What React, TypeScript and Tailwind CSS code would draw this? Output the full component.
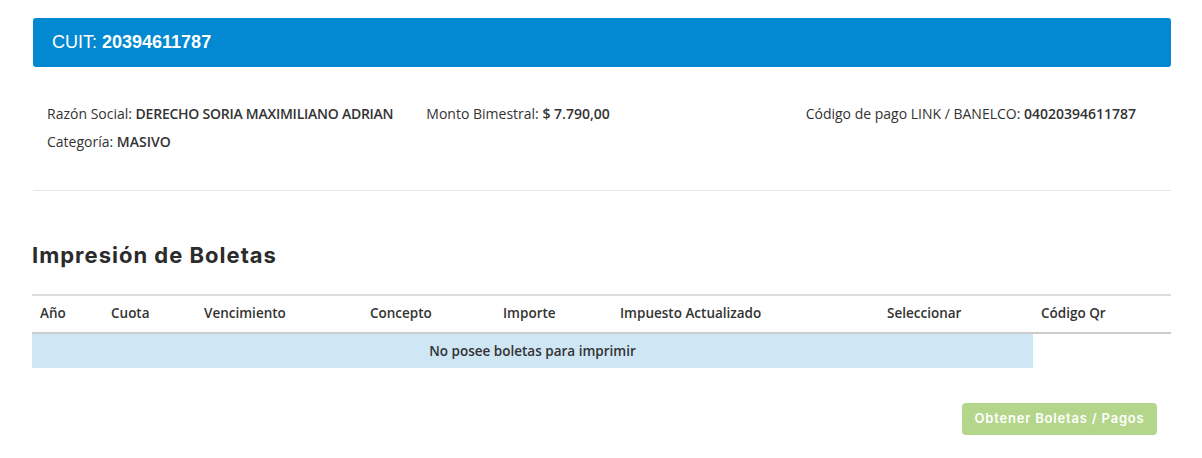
const cols = [
  { label: "Año", w: "w-[71px]" },
  { label: "Cuota", w: "w-[93px]" },
  { label: "Vencimiento", w: "w-[166px]" },
  { label: "Concepto", w: "w-[133px]" },
  { label: "Importe", w: "w-[117px]" },
  { label: "Impuesto Actualizado", w: "w-[267px]" },
  { label: "Seleccionar", w: "w-[154px]" },
  { label: "Código Qr", w: "" },
];

function Field({
  label,
  value,
  tight,
}: {
  label: string;
  value: string;
  tight?: boolean;
}) {
  return (
    <p className="whitespace-nowrap leading-[28px]">
      {label}:{" "}
      <b className={tight ? "font-semibold tracking-[-0.25px]" : "font-semibold"}>
        {value}
      </b>
    </p>
  );
}

export default function App() {
  return (
    <div className="min-h-[458px] bg-white pt-[18px] pl-[32px] pr-[31px] font-['Open_Sans',sans-serif] text-[#333]">
      <div className="ml-px flex h-[49px] items-center rounded-[3px] bg-[#0289d2] px-[19px] font-['Liberation_Sans',Arial,sans-serif] text-[18px] text-white">
        CUIT:&nbsp;<b>20394611787</b>
      </div>

      <div className="ml-px grid grid-cols-3 pt-[33px] pb-[34px] text-[14px]">
        <div className="px-[14px]">
          <Field label="Razón Social" value="DERECHO SORIA MAXIMILIANO ADRIAN" tight />
          <Field label="Categoría" value="MASIVO" />
        </div>
        <div className="px-[14px]">
          <Field label="Monto Bimestral" value="$ 7.790,00" />
        </div>
        <div className="px-[14px]">
          <Field label="Código de pago LINK / BANELCO" value="04020394611787" />
        </div>
      </div>

      <hr className="ml-px border-t border-[#e6e6e6]" />

      <h2 className="mt-[48px] font-['Inter',sans-serif] text-[22px] font-bold leading-[32px] tracking-[1px] text-[#2b2b2b]">
        Impresión de Boletas
      </h2>

      <table className="mt-[23px] w-full table-fixed border-collapse text-[13.5px]">
        <thead>
          <tr className="border-t-2 border-b-2 border-t-[#dddddd] border-b-[#cccccc]">
            {cols.map((c) => (
              <th
                key={c.label}
                className={`${c.w} h-[38px] px-[8px] pb-[2px] text-left font-semibold`}
              >
                {c.label}
              </th>
            ))}
          </tr>
        </thead>
        <tbody>
          <tr>
            <td
              colSpan={7}
              className="h-[35px] bg-[#cfe6f5] text-center font-semibold"
            >
              No posee boletas para imprimir
            </td>
            <td />
          </tr>
        </tbody>
      </table>

      <div className="mt-[35px] flex justify-end pr-[14px]">
        <button className="h-[32px] w-[195px] rounded-[4px] bg-[#b3d68a] font-['Inter',sans-serif] text-[13px] font-semibold tracking-[0.8px] text-white">
          Obtener Boletas / Pagos
        </button>
      </div>
    </div>
  );
}
